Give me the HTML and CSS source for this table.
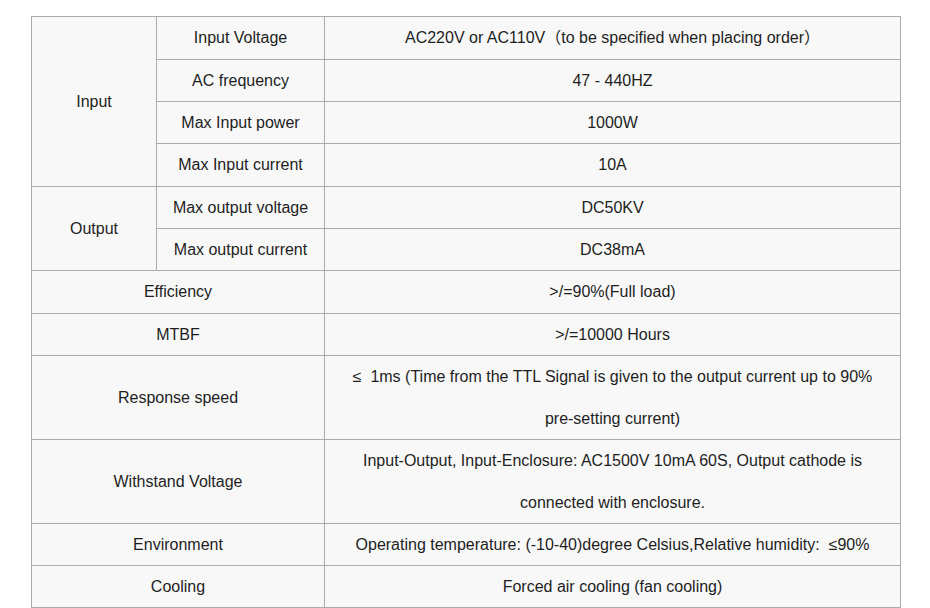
FILE: index.html
```html
<!DOCTYPE html>
<html>
<head>
<meta charset="utf-8">
<link rel="stylesheet" href="styles.css">
</head>
<body>
<div class="wrap">
<table class="spec">
<colgroup><col class="c1"><col class="c2"><col class="c3"></colgroup>
<tbody>
<tr class="r43"><td rowspan="4">Input</td><td>Input Voltage</td><td>AC220V or AC110V（to be specified when placing order）</td></tr>
<tr><td>AC frequency</td><td>47 - 440HZ</td></tr>
<tr><td>Max Input power</td><td>1000W</td></tr>
<tr class="r43"><td>Max Input current</td><td>10A</td></tr>
<tr><td rowspan="2">Output</td><td>Max output voltage</td><td>DC50KV</td></tr>
<tr><td>Max output current</td><td>DC38mA</td></tr>
<tr class="r43"><td colspan="2">Efficiency</td><td>&gt;/=90%(Full load)</td></tr>
<tr><td colspan="2">MTBF</td><td>&gt;/=10000 Hours</td></tr>
<tr class="r84"><td colspan="2">Response speed</td><td class="two">≤&nbsp; 1ms (Time from the TTL Signal is given to the output current up to 90% pre-setting current)</td></tr>
<tr class="r84"><td colspan="2">Withstand Voltage</td><td class="two">Input-Output, Input-Enclosure: AC1500V 10mA 60S, Output cathode is connected with enclosure.</td></tr>
<tr><td colspan="2">Environment</td><td>Operating temperature: (-10-40)degree Celsius,Relative humidity:&nbsp; ≤90%</td></tr>
<tr><td colspan="2">Cooling</td><td>Forced air cooling (fan cooling)</td></tr>
</tbody>
</table>
</div>
</body>
</html>
```
FILE: styles.css
```css
html, body {
  margin: 0;
  padding: 0;
  background: #ffffff;
}
.wrap {
  padding: 16px 0 0 31px;
}
.spec {
  border-collapse: collapse;
  table-layout: fixed;
  width: 869px;
  font-family: "Liberation Sans", Arial, "Noto Sans CJK SC", sans-serif;
  font-size: 16px;
  color: #1e1e1e;
  background: #f8f8f8;
}
.c1 { width: 125px; }
.c2 { width: 168px; }
.c3 { width: 576px; }
.spec tr { height: 42px; }
.spec tr.r43 { height: 43px; }
.spec tr.r84 { height: 84px; }
.spec td {
  border: 1px solid #acacac;
  padding: 0 12px;
  text-align: center;
  vertical-align: middle;
  line-height: 20px;
  white-space: nowrap;
}
.spec td.two {
  white-space: normal;
  line-height: 41.5px;
  padding: 0 14px;
}
```
